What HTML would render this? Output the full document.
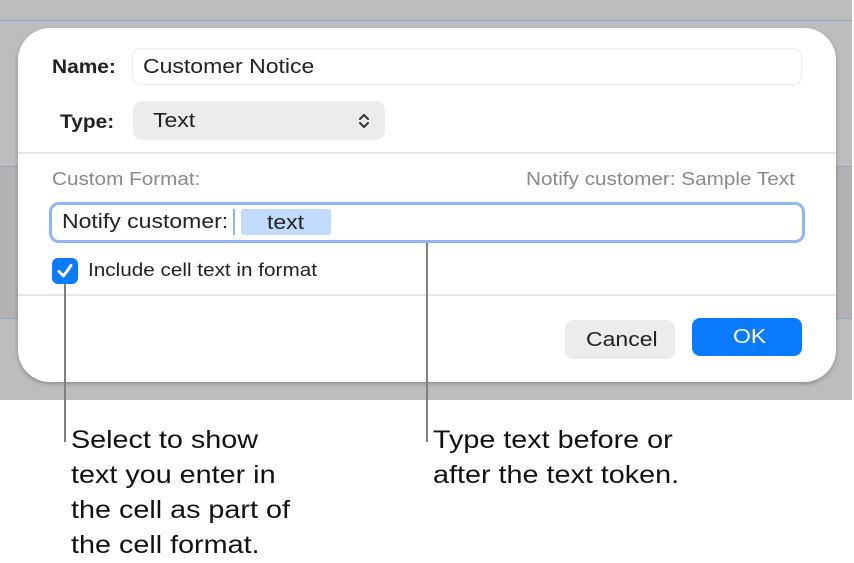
<!DOCTYPE html>
<html><head><style>
*{margin:0;padding:0;box-sizing:border-box}
body{width:854px;height:562px;background:#fff;position:relative;overflow:hidden;font-family:"Liberation Sans",sans-serif;color:#222}
.bg{position:absolute;left:0;top:0;width:852px;height:400px;background:#bdbdbd}
.band{position:absolute;left:0;top:166px;width:852px;height:152px;background:#b2b2b2}
.bl{position:absolute;left:0;width:852px;height:1px;background:#8ea6cf}
.dlg{position:absolute;left:18px;top:28px;width:818px;height:354px;background:#fff;border-radius:32px;box-shadow:0 2px 4px rgba(0,0,0,.25)}
.a{position:absolute;white-space:nowrap}
.s{transform:scaleX(1.15);transform-origin:0 0}
.lbl{font-weight:bold;font-size:19px;color:#222}
.hr{position:absolute;left:18px;width:818px;height:2px;background:#e6e6e6}
</style></head><body>
<div class="bg"></div><div class="band"></div>
<div class="bl" style="top:20px"></div><div class="bl" style="top:166px"></div><div class="bl" style="top:318px"></div>
<div class="dlg"></div>
<div class="a lbl" style="left:52px;top:57px;transform:scaleX(1.1);transform-origin:0 0">Name:</div>
<div class="a" style="left:132px;top:48px;width:670px;height:37px;border:1px solid #ececec;border-radius:9px"></div>
<div class="a s" style="left:143px;top:56px;font-size:20px">Customer Notice</div>
<div class="a lbl" style="left:60px;top:112px;transform:scaleX(1.1);transform-origin:0 0">Type:</div>
<div class="a" style="left:133px;top:101px;width:252px;height:39px;background:#ececec;border-radius:9px"></div>
<div class="a s" style="left:153px;top:110px;font-size:20px">Text</div>
<svg class="a" style="left:357px;top:112px" width="14" height="18" viewBox="0 0 14 18"><path d="M3 7L7 3L11 7M3 11L7 15L11 11" fill="none" stroke="#333" stroke-width="2" stroke-linecap="round" stroke-linejoin="round"/></svg>
<div class="hr" style="top:152px"></div>
<div class="a s" style="left:52px;top:169px;font-size:18px;color:#8a8a8a">Custom Format:</div>
<div class="a s" style="left:526px;top:169px;font-size:18px;color:#8a8a8a">Notify customer: Sample Text</div>
<div class="a" style="left:49px;top:202px;width:756px;height:41px;border:3px solid #91b6f6;border-radius:10px"></div>
<div class="a s" style="left:62px;top:211px;font-size:20px">Notify customer:</div>
<div class="a" style="left:233px;top:209px;width:2px;height:26px;background:#8fb4f0"></div>
<div class="a" style="left:241px;top:209px;width:90px;height:26px;background:#c2dbfd;border-radius:3px"></div>
<div class="a s" style="left:267px;top:212px;font-size:20px">text</div>
<div class="a" style="left:52px;top:258px;width:26px;height:26px;background:#0a7aff;border-radius:6px"></div>
<svg class="a" style="left:52px;top:258px" width="26" height="26"><path d="M7 13.5L11.5 18L19 7.5" fill="none" stroke="#fff" stroke-width="3" stroke-linecap="round" stroke-linejoin="round"/></svg>
<div class="a s" style="left:88px;top:260px;font-size:18px">Include cell text in format</div>
<div class="hr" style="top:294px"></div>
<div class="a" style="left:565px;top:320px;width:110px;height:39px;background:#ececec;border-radius:8px"></div>
<div class="a s" style="left:586px;top:329px;font-size:20px">Cancel</div>
<div class="a" style="left:692px;top:318px;width:110px;height:38px;background:#0a7aff;border-radius:8px"></div>
<div class="a s" style="left:733px;top:326px;font-size:20px;color:#fff">OK</div>
<div class="a" style="left:64px;top:284px;width:2px;height:158px;background:#808080"></div>
<div class="a" style="left:426px;top:243px;width:2px;height:199px;background:#808080"></div>
<div class="a s" style="left:71px;top:423px;font-size:25px;line-height:35px;color:#111">Select to show<br>text you enter in<br>the cell as part of<br>the cell format.</div>
<div class="a s" style="left:433px;top:423px;font-size:25px;line-height:35px;color:#111">Type text before or<br>after the text token.</div>
</body></html>
